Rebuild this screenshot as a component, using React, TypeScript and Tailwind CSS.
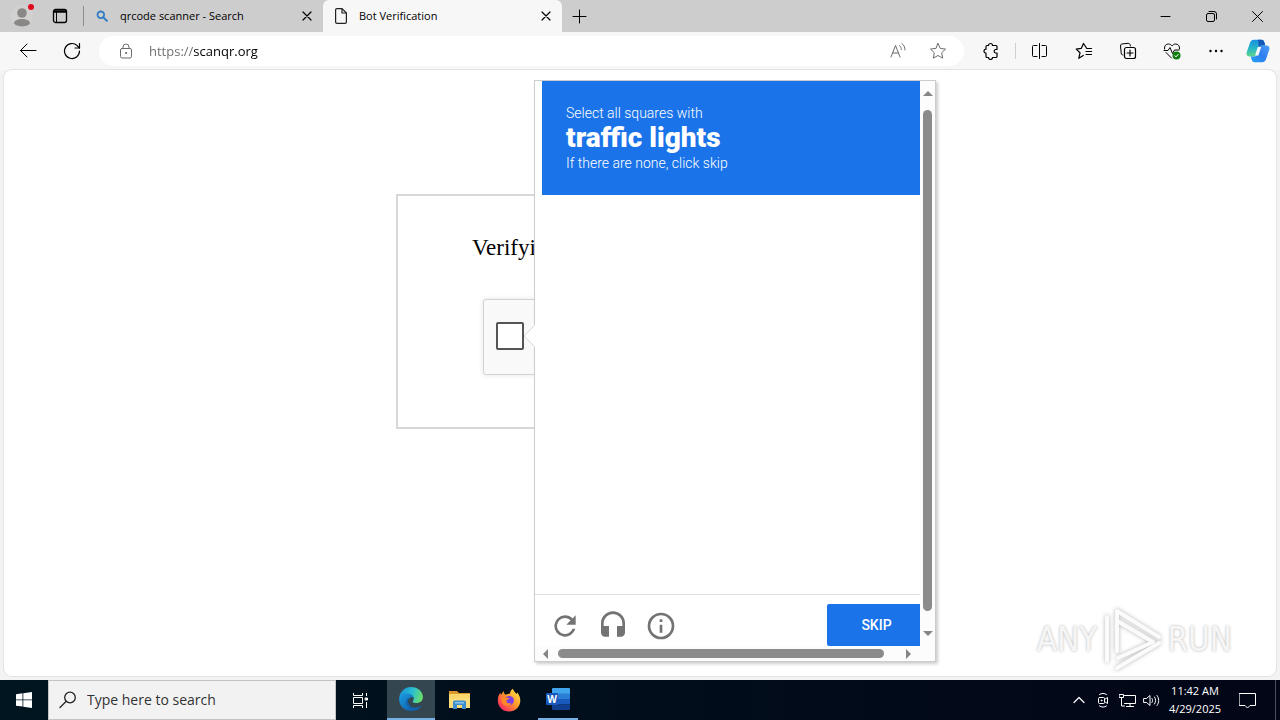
import type { ReactNode } from "react";

type IconProps = { size?: number; className?: string; children: ReactNode };

function Icon({ size = 16, className = "", children }: IconProps) {
  return (
    <svg
      width={size}
      height={size}
      viewBox={`0 0 ${size} ${size}`}
      fill="none"
      stroke="currentColor"
      strokeWidth="1"
      strokeLinecap="round"
      strokeLinejoin="round"
      className={`shrink-0 ${className}`}
      aria-hidden="true"
    >
      {children}
    </svg>
  );
}

function ToolButton({ label, children }: { label: string; children: ReactNode }) {
  return (
    <button aria-label={label} className="flex h-8 w-11 shrink-0 items-center justify-center text-black">
      {children}
    </button>
  );
}

function CloseIcon() {
  return (
    <Icon size={10} className="text-black">
      <path d="M1 1l8 8M9 1L1 9" strokeWidth="1.2" />
    </Icon>
  );
}

function TabStrip() {
  return (
    <header className="flex h-8 items-stretch bg-[#cdcdcd] text-black">
      <button aria-label="Profile" className="relative flex w-11 items-center justify-center">
        <svg width="22" height="22" viewBox="0 0 22 22" aria-hidden="true">
          <circle cx="11" cy="11" r="11" fill="#d3d1d0" />
          <circle cx="11" cy="8" r="4.8" fill="#8a8886" />
          <path d="M3 18.5c0-3 3.500-4.500 8-4.500s8 1.500 8 4.500c-2 2.300-5 3-8 3s-6-.7-8-3z" fill="#8a8886" />
        </svg>
        <span className="absolute top-1 left-7 h-1.5 w-1.5 rounded-full bg-[#e00b1c]" />
      </button>
      <button aria-label="Tab actions" className="flex w-8 items-center justify-center">
        <Icon size={16}>
          <rect x="1.500" y="1.500" width="13" height="13" rx="2" strokeWidth="1.300" />
          <path d="M2 3h12M2 4h12" strokeWidth="1.600" />
          <path d="M4.500 4v10" />
        </Icon>
      </button>
      <div className="ml-[7px] h-5 w-px self-center bg-[#8d8d8d]" />

      {/* Tabs */}
      <div className="flex w-[239px] items-center gap-3 pr-2 pl-3">
        <svg width="12" height="12" viewBox="0 0 12 12" fill="none" stroke="#2f7cc4" strokeLinecap="round" className="shrink-0" aria-hidden="true">
          <circle cx="4.800" cy="4.800" r="3.300" strokeWidth="1.800" />
          <path d="M7.400 7.400l3.400 3.400" strokeWidth="2" />
        </svg>
        <span className="flex-1 truncate text-[11px] leading-4">qrcode scanner - Search</span>
        <button aria-label="Close tab" className="flex h-4 w-4 items-center justify-center">
          <CloseIcon />
        </button>
      </div>
      <div className="flex w-[239px] items-center gap-3 rounded-t-md bg-[#f7f7f7] pr-2 pl-3">
        <svg width="12" height="16" viewBox="0 0 12 16" fill="none" stroke="#222" strokeWidth="1.200" strokeLinejoin="round" className="shrink-0" aria-hidden="true">
          <path d="M7 .6H2A1.400 1.400 0 0 0 .6 2v12A1.400 1.400 0 0 0 2 15.400h8a1.400 1.400 0 0 0 1.400-1.400V5z" />
          <path d="M7 .6V5h4.400" />
        </svg>
        <span className="flex-1 truncate text-[11px] leading-4">Bot Verification</span>
        <button aria-label="Close tab" className="flex h-4 w-4 items-center justify-center">
          <CloseIcon />
        </button>
      </div>
      <button aria-label="New tab" className="flex w-[34px] items-center justify-center">
        <Icon size={15}>
          <path d="M7.500 1v13M1 7.500h13" />
        </Icon>
      </button>

      {/* Window controls */}
      <div className="ml-auto flex">
        <button aria-label="Minimize" className="flex w-[46px] items-center justify-center">
          <Icon size={11}>
            <path d="M1 5.500h9" />
          </Icon>
        </button>
        <button aria-label="Restore" className="flex w-[46px] items-center justify-center">
          <Icon size={11}>
            <rect x=".5" y="2.500" width="8" height="8" rx="1.500" />
            <path d="M3 .5h5A2.500 2.500 0 0 1 10.500 3v5" />
          </Icon>
        </button>
        <button aria-label="Close" className="flex w-[46px] items-center justify-center">
          <Icon size={11}>
            <path d="M.5.5l10 10M10.500.5l-10 10" />
          </Icon>
        </button>
      </div>
    </header>
  );
}

function CopilotLogo() {
  return (
    <svg width="24" height="24" viewBox="0 0 24 24" aria-hidden="true">
      <defs>
        <linearGradient id="copilotLeft" x1="0" y1="0" x2="0" y2="1">
          <stop offset="0" stopColor="#1b8fe0" />
          <stop offset=".5" stopColor="#25b6c9" />
          <stop offset="1" stopColor="#5fd68a" />
        </linearGradient>
        <linearGradient id="copilotRight" x1="1" y1="0" x2="0" y2="1">
          <stop offset="0" stopColor="#4aa0f5" />
          <stop offset=".5" stopColor="#2f7df0" />
          <stop offset="1" stopColor="#1fa5f5" />
        </linearGradient>
      </defs>
      <path d="M8 .8h7.500c1.600 0 2.400 1 2.900 2.600l.9 3h-3.500c-1.600 0-2.400.8-2.900 2.500l-1.900 6.300c-.5 1.600-1.300 2.300-3 2.300H3.600C1 17.500 0 15.600.7 13.200L4 3.800C4.800 1.700 6 .8 8 .8z" fill="url(#copilotLeft)" />
      <path d="M12 .8h3.500c1.600 0 2.400 1 2.900 2.600l.9 3h-3.500c-1.600 0-2.400.8-2.900 2z" fill="#1458b8" />
      <path d="M16 23.200H8.500c-1.600 0-2.400-1-2.900-2.600l-.9-3.100h3.500c1.600 0 2.400-.8 2.900-2.500L13 8.800c.5-1.600 1.300-2.400 3-2.400h4.400c2.600 0 3.600 2 2.900 4.400L20 20.200c-.8 2.100-2 3-4 3z" fill="url(#copilotRight)" />
      <path d="M11.800 8h3.400l-2.800 8.500H9z" fill="#f4f9ff" />
    </svg>
  );
}

function Toolbar() {
  return (
    <div className="flex h-[38px] items-center bg-[#f7f7f7] pl-1.5">
      <ToolButton label="Back">
        <Icon size={18}>
          <path d="M17 8.500H1.500M8 2L1.500 8.500 8 15" />
        </Icon>
      </ToolButton>
      <ToolButton label="Refresh">
        <Icon size={18}>
          <path d="M16.500 9a7.500 7.500 0 1 1-2.300-5.400L16.500 6" strokeWidth="1.200" />
          <path d="M16.500 1.500V6H12" strokeWidth="1.200" />
        </Icon>
      </ToolButton>

      <div className="ml-[5px] flex h-[30px] flex-1 items-center rounded-full bg-white pr-1.5 pl-2 text-[#6b6b6b]">
        <button aria-label="View site information" className="flex w-[38px] shrink-0 justify-center">
          <Icon size={16}>
            <rect x="2.500" y="5.500" width="11" height="9.500" rx="1.500" />
            <path d="M5 5.500V4a3 3 0 0 1 6 0v1.500" />
            <circle cx="8" cy="10" r=".6" fill="currentColor" />
          </Icon>
        </button>
        <input
          aria-label="Address"
          defaultValue="https://scanqr.org"
          className="min-w-0 flex-1 bg-[linear-gradient(90deg,#6b6b6b_49px,#000_49px)] bg-clip-text pl-1 text-[13px] leading-5 text-transparent outline-none"
        />
        <button aria-label="Read aloud" className="flex w-10 shrink-0 justify-center">
          <Icon size={18}>
            <path d="M2 15L6.500 3.500 11 15M3.500 11h6" />
            <path d="M10.500 3.500c1.200 1 1.800 2.300 1.800 4M13 1.500c2 1.600 3 3.800 3 6.500" />
          </Icon>
        </button>
        <button aria-label="Add to favorites" className="flex w-10 shrink-0 justify-center">
          <Icon size={18}>
            <path d="M9 1.500l2.300 4.900 5.200.7-3.800 3.700 1 5.300L9 13.500l-4.700 2.600 1-5.300L1.500 7.100l5.200-.7z" />
          </Icon>
        </button>
      </div>

      <div className="ml-[5px] flex items-center">
        <ToolButton label="Extensions">
          <Icon size={18}>
            <path d="M6.500 3.500a2 2 0 0 1 4 0H14a1 1 0 0 1 1 1v3h-1.500a1.800 1.800 0 0 0 0 3.500H15v3.500a1 1 0 0 1-1 1h-3.500a2 2 0 0 1-4 0H5a1 1 0 0 1-1-1v-3.300a2 2 0 0 1 0-4V4.500a1 1 0 0 1 1-1z" strokeWidth="1.200" />
          </Icon>
        </ToolButton>
        <div className="mx-0.5 h-4 w-px bg-[#cfcfcf]" />
        <ToolButton label="Split screen">
          <Icon size={16}>
            <path d="M7.500.5v15M5 2.500H1.500a1 1 0 0 0-1 1v9a1 1 0 0 0 1 1H5M10 2.500h3.500a1 1 0 0 1 1 1v9a1 1 0 0 1-1 1H10" />
          </Icon>
        </ToolButton>
        <ToolButton label="Favorites">
          <Icon size={18}>
            <path d="M16.500 6.500h-4.700L8.500 1.500 6.200 6.400l-5 .7L5 10.800l-1.200 5.500 4.500-2.800M11 9.500h5.500M11 12.500h5.500" strokeWidth="1.200" />
          </Icon>
        </ToolButton>
        <ToolButton label="Collections">
          <Icon size={18}>
            <path d="M4 13l-.8-.3a1.500 1.500 0 0 1-1-1.800L1.500 4a1.800 1.800 0 0 1 1.300-2l6.400-.7A1.800 1.800 0 0 1 11 2.500l.5 1.500" />
            <rect x="5.500" y="5.500" width="11" height="11" rx="2" strokeWidth="1.200" />
            <path d="M11 8v6M8 11h6" strokeWidth="1.200" />
          </Icon>
        </ToolButton>
        <ToolButton label="Browser essentials">
          <Icon size={18}>
            <path d="M1.500 7C1 4 3 2 5.300 2 7 2 8.300 3 9 4c.7-1 2-2 3.700-2C15 2 17 4 16.500 7M3 10.500L8.500 16M1 8.500h4L7 5.500l2.500 6 2-3.500H16" />
            <circle cx="13.500" cy="13.500" r="4" fill="#107c10" stroke="none" />
            <path d="M11.800 13.700l1.200 1.200 2.200-2.500" stroke="#fff" />
          </Icon>
        </ToolButton>
        <ToolButton label="Settings and more">
          <Icon size={16}>
            <g fill="currentColor" stroke="none">
              <circle cx="2.500" cy="8" r="1.200" />
              <circle cx="8" cy="8" r="1.200" />
              <circle cx="13.500" cy="8" r="1.200" />
            </g>
          </Icon>
        </ToolButton>
        <button aria-label="Copilot" className="flex w-[42px] items-center justify-center pr-0.5">
          <CopilotLogo />
        </button>
      </div>
    </div>
  );
}

function VerifyCard() {
  return (
    <section className="h-[235px] w-[488px] border-2 border-[#d8d8d8] bg-white pt-10">
      <h1 className="pl-[74px] font-['Liberation_Serif',serif] text-[23px] leading-6 text-black">Verifying</h1>
      <div className="mt-[39px] ml-[85px] flex h-[76px] w-[304px] items-start rounded-[3px] border border-[#d3d3d3] bg-[#f9f9f9] pt-[22px] pl-3 shadow-[0_0_4px_1px_rgba(0,0,0,0.08)]">
        <input
          type="checkbox"
          aria-label="I'm not a robot"
          className="h-7 w-7 appearance-none rounded-[2px] border-2 border-[#555] bg-white"
        />
      </div>
    </section>
  );
}

function Arrow({ points }: { points: string }) {
  return (
    <svg width="10" height="10" viewBox="0 0 10 10" fill="#858585" className="shrink-0" aria-hidden="true">
      <polygon points={points} />
    </svg>
  );
}

function ChallengePopup() {
  return (
    <div className="absolute top-2.5 left-1/2 -ml-[106px] flex h-[582px] w-[402px] flex-col border border-[#ccc] bg-white font-[Roboto,sans-serif] shadow-[2px_2px_3px_rgba(0,0,0,0.2)]">
      {/* Callout pointing at the tick box */}
      <svg width="12" height="22" viewBox="0 0 12 22" className="absolute top-[244px] -left-3" aria-hidden="true">
        <path d="M12 0L1 11l11 11z" fill="#fff" />
        <path d="M11 1L1 11l10 10" fill="none" stroke="#d6d6d6" />
      </svg>

      <div className="flex min-h-0 flex-1">
        <div className="flex min-w-0 flex-1 flex-col">
          <div className="ml-[7px] bg-[#1a73e8] p-6 text-sm leading-4 font-light text-white">
            <p>Select all squares with</p>
            <p className="text-[28px] leading-[34px] font-black">traffic lights</p>
            <p>If there are none, click skip</p>
          </div>
          <div className="mt-auto flex h-[52px] items-end border-t border-[#dfdfdf] text-[#737373]">
            <button aria-label="Get a new challenge" className="ml-1.5 flex h-10 w-12 items-center justify-center">
              <svg width="32" height="32" viewBox="0 0 24 24" fill="currentColor" aria-hidden="true">
                <path d="M17.650 6.350A7.960 7.960 0 0 0 12 4a8 8 0 1 0 7.730 10h-2.080A6 6 0 1 1 12 6c1.660 0 3.140.69 4.220 1.780L13 11h7V4z" />
              </svg>
            </button>
            <button aria-label="Get an audio challenge" className="flex h-10 w-12 items-center justify-center">
              <svg width="32" height="32" viewBox="0 0 24 24" fill="currentColor" aria-hidden="true">
                <path d="M12 1a9 9 0 0 0-9 9v7c0 1.660 1.340 3 3 3h3v-8H5v-2a7 7 0 0 1 14 0v2h-4v8h3c1.660 0 3-1.340 3-3v-7a9 9 0 0 0-9-9z" />
              </svg>
            </button>
            <button aria-label="Help" className="flex h-10 w-12 items-center justify-center">
              <svg width="32" height="32" viewBox="0 0 24 24" fill="currentColor" aria-hidden="true">
                <path d="M11 17h2v-6h-2v6zm1-15a10 10 0 1 0 0 20 10 10 0 0 0 0-20zm0 18a8 8 0 1 1 0-16 8 8 0 0 1 0 16zM11 9h2V7h-2v2z" />
              </svg>
            </button>
            <button className="ml-auto h-[42px] w-[93px] rounded-l-[2px] bg-[#1a73e8] pl-1.5 text-sm font-medium text-white">SKIP</button>
          </div>
        </div>
        <div className="flex w-[15px] flex-col items-center bg-[#fcfcfc] pt-2 pb-2">
          <Arrow points="0,7 5,2 10,7" />
          <div className="mt-[11px] mb-[17px] w-[9px] flex-1 rounded-full bg-[#8b8b8b]" />
          <Arrow points="0,3 10,3 5,8" />
        </div>
      </div>
      <div className="flex h-[15px] items-center bg-[#fcfcfc] pr-[22px] pl-1.5">
        <Arrow points="7,0 7,10 2,5" />
        <div className="mr-[19px] ml-[7px] h-[9px] flex-1 rounded-full bg-[#8b8b8b]" />
        <Arrow points="3,0 8,5 3,10" />
      </div>
    </div>
  );
}

function Watermark() {
  return (
    <div className="absolute right-11 bottom-0 flex h-[72px] items-center gap-1 font-['DejaVu_Sans_Condensed','DejaVu_Sans',sans-serif] text-[33px] leading-10 text-[#f6f6f6] [text-shadow:0_0_3px_#b4b4b4]">
      <span>ANY</span>
      <svg width="62" height="66" viewBox="0 0 62 66" fill="none" stroke="#fbfbfb" strokeWidth="4" strokeLinejoin="round" strokeLinecap="round" className="drop-shadow-[0_0_2px_#b4b4b4]" aria-hidden="true">
        <path d="M6 10v44" />
        <path d="M16 44V4l42 26" />
        <path d="M18 15l34 20L17 51" />
        <path d="M58 36L16 61" />
      </svg>
      <span>RUN</span>
    </div>
  );
}

function EdgeLogo() {
  return (
    <svg width="24" height="24" viewBox="0 0 24 24" aria-hidden="true">
      <defs>
        <linearGradient id="edgeTop" x1="0" y1=".3" x2="1" y2=".5">
          <stop offset="0" stopColor="#1a8fd8" />
          <stop offset=".55" stopColor="#2bbfd0" />
          <stop offset="1" stopColor="#6be06a" />
        </linearGradient>
        <linearGradient id="edgeBase" x1="0" y1="0" x2="1" y2="1">
          <stop offset="0" stopColor="#1b9de2" />
          <stop offset="1" stopColor="#0c4f9c" />
        </linearGradient>
      </defs>
      <path d="M.2 11C.8 4.800 5.700.1 12 .1c7 0 11.900 4.700 11.900 10 0 3.800-2.900 6-6.300 6-2.600 0-3.900-.8-3.900-1.700 0-.6 1-1.100 1-3 0-2.500-2.600-4.400-6.200-4.400C4.500 7 1.500 8.500.2 11z" fill="url(#edgeTop)" />
      <path d="M.1 12C.2 8.300 3.800 6.500 8 6.500c3.800 0 6.600 2 6.700 4.500-1.500-1.500-5.700-.7-5.700 3.400 0 4.600 4.300 7 8.500 6.300 2-.3 3.500-1.300 4.700-2.300C20.200 22 16.600 24 12 24 5.200 24 0 18.600.1 12z" fill="url(#edgeBase)" />
      <path d="M9 14.400c0 4.600 4.300 7 8.500 6.300 2-.3 3.500-1.300 4.700-2.300-1 2-2.600 3.500-4.600 4.500C11 23.500 6.500 19 7 14.500c.3-2 1.500-3.500 3-4.200-.7 1-1 2.500-1 4.100z" fill="#1463ad" />
    </svg>
  );
}

function ExplorerLogo() {
  return (
    <svg width="24" height="20" viewBox="0 0 24 20" aria-hidden="true">
      <path d="M1 1h8l2 2h11v5H1z" fill="#d99a2b" />
      <path d="M1 4h21v14H1z" fill="#f9d66b" />
      <path d="M1 8h21v10H1z" fill="#fbdc7a" />
      <path d="M5 19v-7a1.500 1.500 0 0 1 1.500-1.500h10A1.500 1.500 0 0 1 18 12v7h-4v-4H9v4z" fill="#3e8fd0" />
      <path d="M7 12h9v1.500H7z" fill="#8cc4ee" />
    </svg>
  );
}

function FirefoxLogo() {
  return (
    <svg width="24" height="24" viewBox="0 0 24 24" aria-hidden="true">
      <defs>
        <linearGradient id="foxBody" x1="1" y1="0" x2="0" y2="1">
          <stop offset="0" stopColor="#fff04d" />
          <stop offset=".45" stopColor="#ff9a2b" />
          <stop offset=".8" stopColor="#fb3b57" />
          <stop offset="1" stopColor="#e0289a" />
        </linearGradient>
      </defs>
      <path d="M13 5.500C13.300 3 14.500 1.500 16 .8c.4 2.500 2 3.400 3.500 5.200l.8-1.500c2 2.500 3 5.300 3 8C23.300 19 18.300 23.500 12 23.500S.8 18.700.8 12.500C.8 9 2 6.500 3.300 4.800L4 7l2.500-4c.3 1.800 1 3 2 3.800 1.500-.6 3-1 4.500-1.300z" fill="url(#foxBody)" />
      <circle cx="12.300" cy="12.500" r="4.600" fill="#7b3fe4" />
      <path d="M4.500 9.500c2-1 4-.6 5 .2l3 .4c-.4 1.300-2 1.500-3 2.300-.5 2.500 2.500 3.600 5 2.300-1 2.500-3.500 3.600-6 2.800-2.800-.9-4.400-4-4-8z" fill="#ff8a28" />
    </svg>
  );
}

function WordLogo() {
  return (
    <svg width="24" height="22" viewBox="0 0 24 22" aria-hidden="true">
      <path d="M7 0h16a1 1 0 0 1 1 1v5H6V1a1 1 0 0 1 1-1z" fill="#41a5ee" />
      <path d="M6 5.500h18V11H6z" fill="#2b7cd3" />
      <path d="M6 11h18v5.500H6z" fill="#185abd" />
      <path d="M6 16.500h18V21a1 1 0 0 1-1 1H7a1 1 0 0 1-1-1z" fill="#103f91" />
      <rect y="5" width="12" height="12" rx="1" fill="#185abd" />
      <text x="6" y="15" textAnchor="middle" fontSize="10" fontWeight="700" fill="#fff">
        W
      </text>
    </svg>
  );
}

function Taskbar() {
  return (
    <footer className="flex h-10 items-stretch bg-linear-to-r from-[#00151f] to-[#020617] text-white">
      <button aria-label="Start" className="flex w-12 items-center justify-center">
        <svg width="16" height="16" viewBox="0 0 16 16" fill="#fff" aria-hidden="true">
          <path d="M0 2.200L6.500 1.300v6.200H0zM7.300 1.200L16 0v7.500H7.300zM0 8.300h6.500v6.300L0 13.700zM7.300 8.300H16V16l-8.700-1.200z" />
        </svg>
      </button>
      <label className="flex w-72 items-center gap-2.5 border border-[#c4c4c4] bg-[#f2f2f2] pl-2.5 text-[#222]">
        <Icon size={18}>
          <circle cx="11" cy="6.500" r="5.300" strokeWidth="1.300" />
          <path d="M7 10.500L1 16.500" strokeWidth="1.300" />
        </Icon>
        <input
          aria-label="Search"
          placeholder="Type here to search"
          className="min-w-0 flex-1 bg-transparent text-sm leading-5 outline-none placeholder:text-[#333]"
        />
      </label>
      <button aria-label="Task view" className="mr-[3px] flex w-12 items-center justify-center">
        <Icon size={17}>
          <path d="M1.500 1v2.500h9V1M1.500 16v-2.500h9V16M1.500 5.500h9v6h-9zM14.500 1v3M14.500 10v6" strokeLinecap="butt" />
          <rect x="13.500" y="6" width="2" height="2" fill="#fff" />
        </Icon>
      </button>
      <div className="flex gap-px">
        <button aria-label="Microsoft Edge" className="flex w-12 items-center justify-center border-b-2 border-[#76b0e4] bg-[#34464f]">
          <EdgeLogo />
        </button>
        <button aria-label="File Explorer" className="flex w-12 items-center justify-center">
          <ExplorerLogo />
        </button>
        <button aria-label="Firefox" className="flex w-12 items-center justify-center">
          <FirefoxLogo />
        </button>
        <button aria-label="Word" className="mx-1 flex w-10 items-center justify-center border-b-2 border-[#76b0e4]">
          <WordLogo />
        </button>
      </div>

      {/* System tray */}
      <div className="ml-auto flex items-stretch">
        <button aria-label="Show hidden icons" className="flex w-6 items-center justify-center">
          <Icon size={12}>
            <path d="M1 8.500l5-5 5 5" strokeWidth="1.200" />
          </Icon>
        </button>
        <button aria-label="Meet now" className="flex w-6 items-center justify-center">
          <Icon size={16}>
            <rect x="3.500" y="5.500" width="6" height="6" rx="1" />
            <circle cx="6.500" cy="8.500" r=".5" />
            <path d="M9.500 7.500l3-2v6l-3-2M4.500 2.500c2-1.500 5-1.500 7 0M4.500 14c2 1.500 5 1.500 7 0" />
          </Icon>
        </button>
        <button aria-label="Network" className="flex w-6 items-center justify-center">
          <Icon size={17}>
            <path d="M5.500 3.500h11v8h-11M11 11.500v3M7.500 14.500h7M.5 2.500h4v3h-4zM2.500 5.500v8.500h3" />
          </Icon>
        </button>
        <button aria-label="Volume" className="flex w-6 items-center justify-center">
          <Icon size={17}>
            <path d="M1 6.500h2.500L7 3.500v10l-3.500-3H1zM9 6.500c.8 1.200.8 2.800 0 4M11.500 5c1.500 2.200 1.500 4.800 0 7M14 3.500c2.300 3 2.300 7 0 10" />
          </Icon>
        </button>
        <button className="flex w-16 flex-col items-center justify-center text-[11px] leading-[18px]">
          <span>11:42 AM</span>
          <span>4/29/2025</span>
        </button>
        <button aria-label="Notifications" className="flex w-10 items-center justify-center">
          <Icon size={17}>
            <path d="M.5 1.500h16v12H11L8.500 16 6 13.500H.5z" />
          </Icon>
        </button>
        <button aria-label="Show desktop" className="ml-2 w-[5px] border-l border-[#4a5260]" />
      </div>
    </footer>
  );
}

export default function App() {
  return (
    <div className="flex min-h-screen flex-col bg-[#f3f3f3] font-['Open_Sans',sans-serif]">
      <TabStrip />
      <Toolbar />
      <main className="relative mx-1 mb-1 flex flex-1 flex-col items-center rounded-lg bg-white pt-[124px] pb-60 shadow-[0_0_0_1px_#e3e3e3]">
        <VerifyCard />
        <ChallengePopup />
        <Watermark />
      </main>
      <Taskbar />
    </div>
  );
}
